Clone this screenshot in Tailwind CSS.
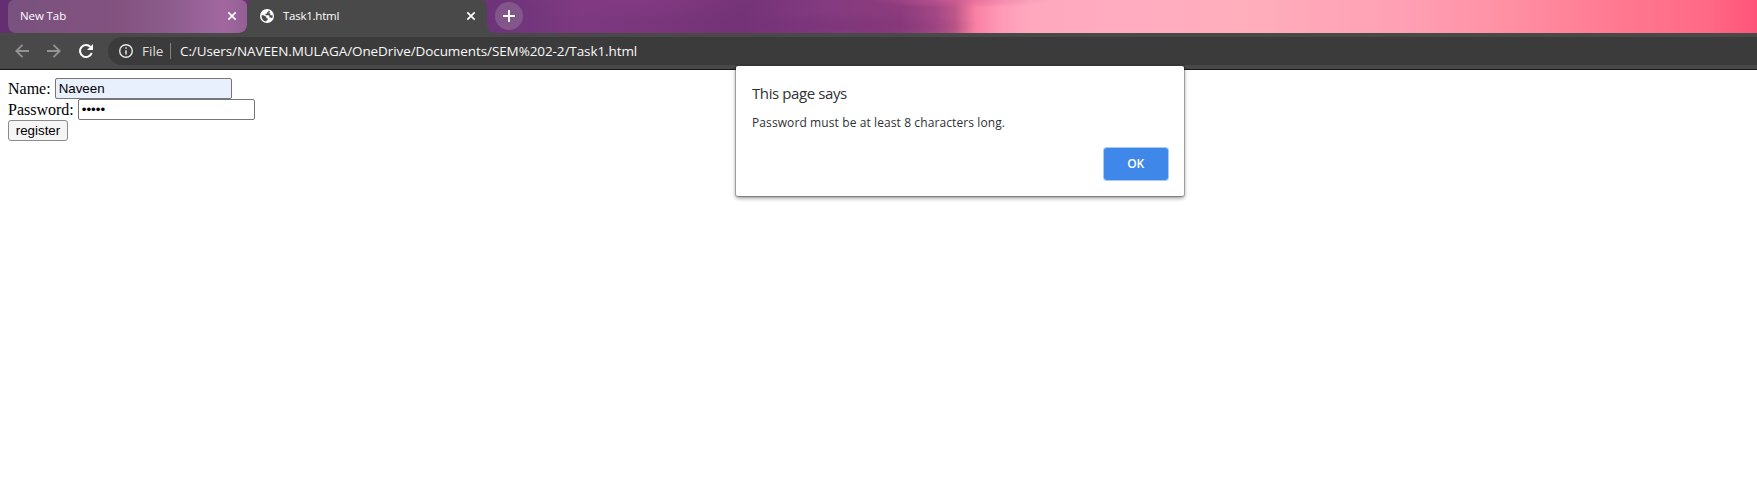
<!DOCTYPE html>
<html lang="en">
<head>
<meta charset="utf-8">
<title>Task1.html</title>
<script src="https://cdn.jsdelivr.net/npm/@tailwindcss/browser@4"></script>
</head>
<body class="relative h-[479px] w-[1757px] overflow-hidden bg-white font-['Open_Sans',sans-serif]">
<header>
  <div class="flex h-[33px] bg-[radial-gradient(ellipse_160px_14px_at_820px_26px,#74307480,transparent),radial-gradient(ellipse_120px_22px_at_640px_0px,#8f3f8a70,transparent),radial-gradient(ellipse_90px_8px_at_960px_0px,#d8609a80,transparent),linear-gradient(90deg,#652e72_0,#6d347a_500px,#7d397f_580px,#743377_740px,#853b80_830px,#8c3b7c_900px,#a24785_935px,#bd5789_955px,#f87fa3_975px,#ff9ab6_1000px,#ffa8be_1030px,#ffacc0_1140px,#ffaebc_1240px,#ffa0b4_1400px,#ff8fa3_1510px,#ff7890_1620px,#ff6884_1710px,#ff5379_1757px)] pl-2 text-[11.5px] text-white">
    <div class="flex h-[33px] w-[239px] items-center rounded-t-[6px] rounded-b-lg bg-[linear-gradient(90deg,#79527f,#83527f_45%,#8b5b8b_65%,#a168a0_90%,#945f94)] pr-[10px] pb-[1px] pl-3">
      <span class="flex-1 tracking-[-0.1px]">New Tab</span>
      <svg class="size-[10px]" viewBox="0 0 10 10" fill="none" stroke="#fff" stroke-width="1.7"><path d="M1.3 1.3 8.7 8.7M8.7 1.3 1.3 8.7"/></svg>
    </div>
    <div class="relative flex h-[33px] w-[240px] items-center rounded-t-[6px] bg-[#494949] pr-[11px] pb-[1px] pl-[13px]">
      <svg class="absolute bottom-0 -left-2 size-2" viewBox="0 0 8 8"><path fill="#494949" d="M8 0V8H0A8 8 0 0 0 8 0Z"/></svg>
      <svg class="absolute -right-2 bottom-0 size-2" viewBox="0 0 8 8"><path fill="#494949" d="M0 0V8H8A8 8 0 0 1 0 0Z"/></svg>
      <svg class="mr-[9px] size-[14px]" viewBox="0 0 14 14"><circle cx="7" cy="7" r="7" fill="#fff"/><path fill="#494949" d="M8.600 1.600C8.700 2.700 8 3.400 6.900 3.400V4.800H5.400V6.200H8.600C9.200 6.200 9.400 6.600 9.400 7.200V8.600H10.600C11.300 8.600 11.700 9 11.900 9.600 12.600 8.700 12.700 7.600 12.600 6.300H11.200C10.500 6.300 10.200 5.900 10.200 5.300V4.200H8.600V3.500H9.900V2.200ZM1.500 6.200H3.400L6.300 7.800V9.200H7.700V10.600C7.700 11.500 7 11.600 6.300 11.600V12.500C3.500 12.200 1.400 9.900 1.500 6.200Z"/></svg>
      <span class="flex-1 tracking-[-0.25px]">Task1.html</span>
      <svg class="size-[10px]" viewBox="0 0 10 10" fill="none" stroke="#fff" stroke-width="1.7"><path d="M1.300 1.300 8.700 8.700M8.700 1.300 1.300 8.700"/></svg>
    </div>
    <div class="mt-[2px] ml-2 flex size-7 items-center justify-center rounded-full bg-[#83568a]">
      <svg class="size-3" viewBox="0 0 12 12" stroke="#fff" stroke-width="2"><path d="M6 0V12M0 6H12"/></svg>
    </div>
  </div>
  <nav class="flex h-[37px] items-center border-b border-[#191919] bg-[#494949] pl-[15px]">
    <svg class="size-[14px]" viewBox="0 0 14 14" fill="none" stroke="#939393" stroke-width="1.8"><path d="M14 7H1.500M7.500.8 1.300 7l6.200 6.200"/></svg>
    <svg class="ml-[18px] size-[14px]" viewBox="0 0 14 14" fill="none" stroke="#939393" stroke-width="1.800"><path d="M0 7H12.500M6.500.8 12.700 7l-6.200 6.200"/></svg>
    <svg class="ml-[18px] size-[14px]" viewBox="0 0 14 14"><path d="M12.700 9A6 6 0 1 1 11.400 2.900" fill="none" stroke="#fff" stroke-width="2"/><path fill="#fff" d="M14 0V6H8Z"/></svg>
    <div class="ml-[15px] flex h-7 flex-1 items-center rounded-l-full bg-[#3b3b3b] pl-[11px] text-[13.5px] text-[#f8f8f8]">
      <svg class="size-[14px]" viewBox="0 0 14 14"><circle cx="7" cy="7" r="6.300" fill="none" stroke="#e8e8e8" stroke-width="1.400"/><path stroke="#e8e8e8" stroke-width="1.500" d="M7 6.200V10.600M7 3.300V4.800"/></svg>
      <span class="ml-[9px] w-[28px] pt-px tracking-[0px] text-[#dedede]">File</span>
      <span class="h-4 w-px bg-[#858585]"></span>
      <span class="ml-[9px] pt-px tracking-[-0.09px] whitespace-nowrap">C:/Users/NAVEEN.MULAGA/OneDrive/Documents/SEM%202-2/Task1.html</span>
    </div>
  </nav>
</header>
<main class="px-2 pt-2 font-['Liberation_Serif',serif] text-[16px] leading-[21px] text-black">
  <label class="flex h-[21px] items-center">Name:<input type="text" value="Naveen" class="ml-1 h-[21px] w-[177px] rounded-[2px] border border-[#767676] bg-[#e8f0fe] px-[3px] font-['Liberation_Sans',sans-serif] text-[13.333px]"></label>
  <label class="flex h-[21px] items-center">Password:<input type="password" value="12345" class="ml-1 h-[21px] w-[177px] rounded-[2px] border border-[#767676] bg-white px-[3px] font-['Liberation_Sans',sans-serif] text-[13.333px]"></label>
  <button class="block h-[21px] w-[60px] rounded-[3px] border border-[#8a8a8a] bg-[#f5f5f5] font-['Liberation_Sans',sans-serif] text-[13.333px] leading-[19px]">register</button>
</main>
<section role="dialog" class="absolute top-[66px] left-[736px] flex h-[130px] w-[448px] flex-col rounded-[2px] bg-white px-4 pt-[17px] pb-4 text-[#303134] shadow-[0_0_1px_1px_#00000045,0_2px_4px_#00000070]">
  <h1 class="text-[15px] leading-5 tracking-[-0.4px]">This page says</h1>
  <p class="mt-[11px] text-[12px] leading-[18px] tracking-[0.1px]">Password must be at least 8 characters long.</p>
  <button class="mt-auto h-8 w-16 self-end rounded-[3px] bg-[#3f88e9] pr-px text-[12px] font-semibold tracking-[-0.3px] text-white shadow-[0_0_0_1px_#a6c9f7]">OK</button>
</section>
</body>
</html>
